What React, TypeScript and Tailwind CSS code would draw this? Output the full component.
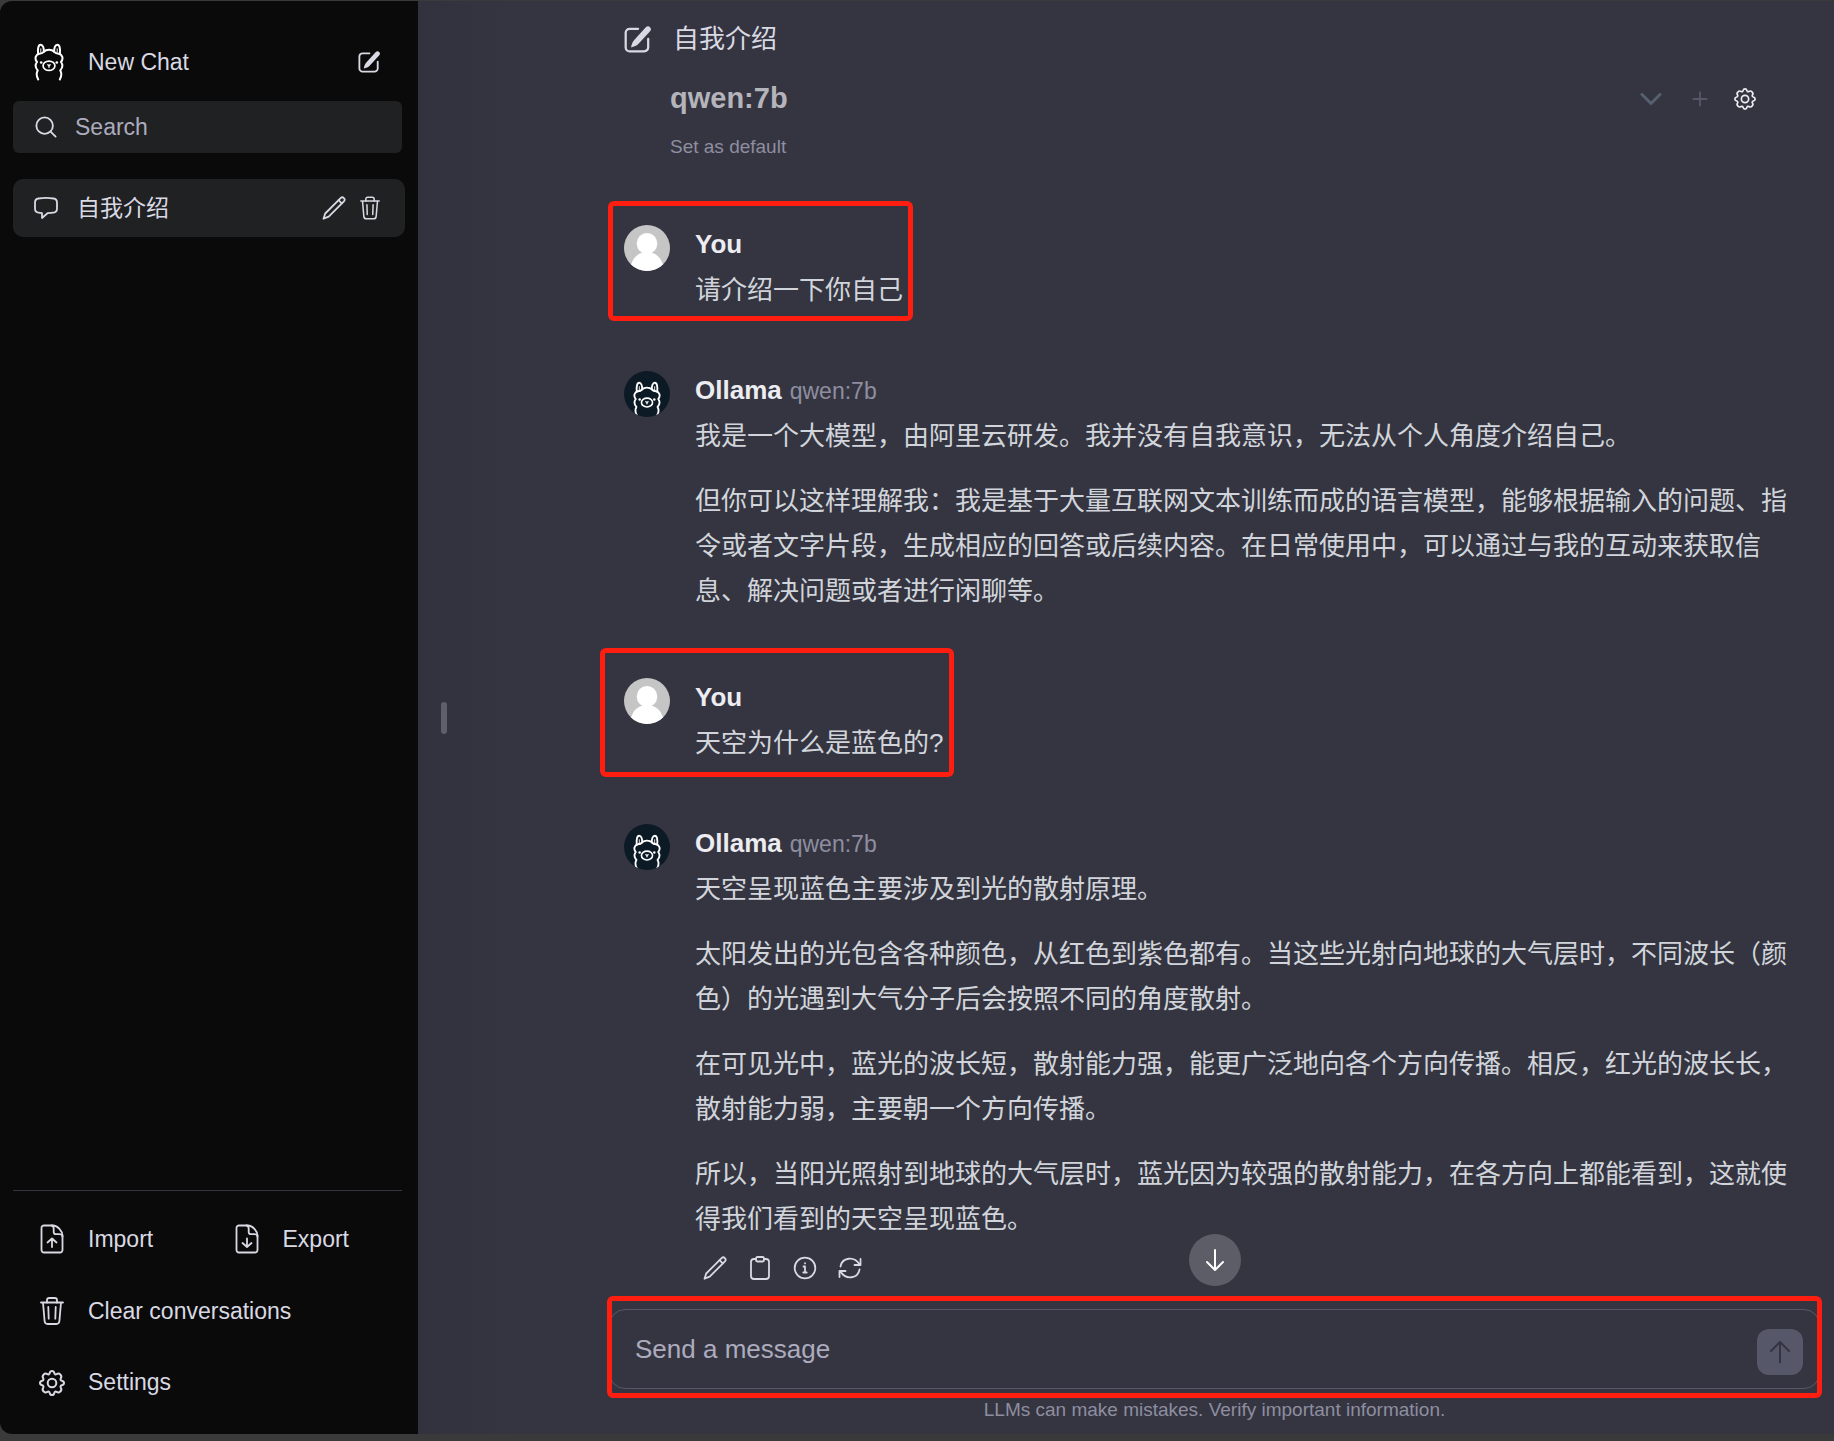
import React, { useState } from 'react';

type IconProps = { className?: string };

function Icon({ className, children, viewBox = '0 0 24 24' }: IconProps & { children: React.ReactNode; viewBox?: string }) {
  return (
    <svg
      viewBox={viewBox}
      className={className}
      fill="none"
      stroke="currentColor"
      strokeWidth={1.8}
      strokeLinecap="round"
      strokeLinejoin="round"
      aria-hidden="true"
    >
      {children}
    </svg>
  );
}

function Llama({ className }: IconProps) {
  return (
    <Icon className={className} viewBox="0 0 34 40">
      <g strokeWidth={2.1}>
        <path d="M5.500 38.500C3.800 35.500 3.600 31.500 5 29C2.500 26 2.300 22.500 4.300 20C1.200 16.500 2.800 12 6.800 11.200C9.200 11 10.200 10.500 11.500 9.200C14 6.400 20 6.400 22.500 9.200C23.800 10.500 24.800 11 27.200 11.200C31.200 12 32.800 16.500 29.700 20C31.700 22.500 31.500 26 29 29C30.400 31.500 30.200 35.500 28.500 38.500" />
        <path d="M5.400 11.500C4.800 5.500 5.800 1.600 8.100 1.600C10.600 1.600 11.700 5.200 11.500 9" />
        <path d="M28.600 11.500C29.200 5.500 28.200 1.600 25.900 1.600C23.400 1.600 22.300 5.200 22.500 9" />
        <path d="M8.300 6V9.500M25.700 6V9.500" strokeWidth={1} />
      </g>
      <ellipse cx="17" cy="24" rx="6.300" ry="5" />
      <path d="M15.800 23L17 24L18.200 23M17 24V25.500" strokeWidth={1.500} />
      <circle cx="8.700" cy="20.500" r="1.400" fill="currentColor" stroke="none" />
      <circle cx="25.300" cy="20.500" r="1.400" fill="currentColor" stroke="none" />
    </Icon>
  );
}

function ComposeIcon({ className }: IconProps) {
  return (
    <Icon className={className}>
      <path strokeWidth={2} d="M12.500 2.500H5A3.500 3.500 0 0 0 1.500 6V19A3.500 3.500 0 0 0 5 22.500H18A3.500 3.500 0 0 0 21.500 19V11.500" />
      <path fill="currentColor" stroke="none" d="M23.100 1C24.200 2.100 24.200 3.600 23.200 4.700L12.700 16.100C11.200 17.600 9 18.500 6.300 19.200C6.600 16.500 7.700 14 9.300 12.300L19.400 1.200C20.400 0.100 22 0 23.100 1Z" />
    </Icon>
  );
}

function PencilIcon({ className }: IconProps) {
  return (
    <Icon className={className}>
      <path d="M1.500 22.700L3.200 17.500L18.600 2.100C20.800 0 24 3 21.900 5.300L6.700 20.700Z" />
      <path d="M16.500 4.200L19.800 7.400" />
    </Icon>
  );
}

function TrashIcon({ className }: IconProps) {
  return (
    <Icon className={className} viewBox="0 0 24 28">
      <path d="M1 5.500H23M3 5.500L4.600 24C4.800 26 5.700 27 7.600 27H16.400C18.300 27 19.200 26 19.400 24L21 5.500" />
      <path d="M7 5.500V3.300C7 1.700 7.800 1 9.300 1H14.700C16.200 1 17 1.700 17 3.300V5.500M8.300 10L8.700 21.700M15.700 10L15.300 21.700" />
    </Icon>
  );
}

function GearIcon({ className }: IconProps) {
  return (
    <Icon className={className} viewBox="0 0 26 26">
      <g strokeWidth={2}>
        <path d="M13 1C14.300 1 15 1.900 15.300 3.100C15.600 4.300 16.500 4.700 17.600 4.100C18.700 3.400 19.900 3.100 21.300 4.500C22.900 6 22.500 7.200 21.800 8.300C21.200 9.400 21.600 10.400 22.800 10.700C24 11 25 11.700 25 13C25 14.300 24 15 22.800 15.300C21.600 15.600 21.200 16.600 21.800 17.700C22.500 18.800 22.900 20 21.300 21.500C19.900 22.900 18.700 22.600 17.600 21.900C16.500 21.300 15.600 21.700 15.300 22.900C15 24.100 14.300 25 13 25C11.700 25 11 24.100 10.700 22.900C10.400 21.700 9.500 21.300 8.400 21.900C7.300 22.600 6.100 22.900 4.700 21.500C3.100 20 3.500 18.800 4.200 17.700C4.800 16.600 4.400 15.600 3.200 15.300C2 15 1 14.300 1 13C1 11.700 2 11 3.200 10.700C4.400 10.400 4.800 9.400 4.200 8.300C3.500 7.200 3.100 6 4.700 4.500C6.100 3.100 7.300 3.400 8.400 4.100C9.500 4.700 10.400 4.300 10.700 3.100C11 1.900 11.700 1 13 1Z" />
        <circle cx="13" cy="13" r="4.300" />
      </g>
    </Icon>
  );
}

function FileIcon({ className, down }: IconProps & { down?: boolean }) {
  return (
    <Icon className={className} viewBox="0 0 24 30">
      <path d="M4 1.500H13C17.500 1.500 22.500 7 22.500 11.500V26A2.500 2.500 0 0 1 20 28.500H4A2.500 2.500 0 0 1 1.500 26V4A2.500 2.500 0 0 1 4 1.500Z" />
      <path d="M11.500 1.500C13.500 1.500 13.700 3.500 13.700 5V8C13.700 9.500 14.400 10.200 15.900 10.200H19C20.500 10.200 22.500 10.500 22.500 12.500" />
      {down ? <path d="M12 14.500V23M7.500 19L12 23L16.500 19" /> : <path d="M12 23V14.500M7.500 18.500L12 14.500L16.500 18.500" />}
    </Icon>
  );
}

function UserAvatar() {
  return (
    <svg viewBox="0 0 46 46" className="size-[46px] shrink-0 rounded-full bg-[#c5c5c5]" aria-hidden="true">
      <ellipse cx="23" cy="18.500" rx="10.300" ry="10.500" fill="#fff" />
      <path d="M7 40C9 32 15 27 23 27C31 27 37 32 39 40C35 44 29 46 23 46C17 46 11 44 7 40Z" fill="#fff" />
    </svg>
  );
}

interface Message {
  from: 'You' | 'Ollama';
  paragraphs: string[];
}

const MESSAGES: Message[] = [
  { from: 'You', paragraphs: ['请介绍一下你自己'] },
  {
    from: 'Ollama',
    paragraphs: [
      '我是一个大模型，由阿里云研发。我并没有自我意识，无法从个人角度介绍自己。',
      '但你可以这样理解我：我是基于大量互联网文本训练而成的语言模型，能够根据输入的问题、指令或者文字片段，生成相应的回答或后续内容。在日常使用中，可以通过与我的互动来获取信息、解决问题或者进行闲聊等。',
    ],
  },
  { from: 'You', paragraphs: ['天空为什么是蓝色的?'] },
  {
    from: 'Ollama',
    paragraphs: [
      '天空呈现蓝色主要涉及到光的散射原理。',
      '太阳发出的光包含各种颜色，从红色到紫色都有。当这些光射向地球的大气层时，不同波长（颜色）的光遇到大气分子后会按照不同的角度散射。',
      '在可见光中，蓝光的波长短，散射能力强，能更广泛地向各个方向传播。相反，红光的波长长，散射能力弱，主要朝一个方向传播。',
      '所以，当阳光照射到地球的大气层时，蓝光因为较强的散射能力，在各方向上都能看到，这就使得我们看到的天空呈现蓝色。',
    ],
  },
];

// red frames around the user's turns, in order of appearance
const FRAMES = [
  '-left-4 -top-6 h-[120px] w-[305px]',
  '-left-6 -top-[30px] h-[129px] w-[354px]',
];

function MessageRow({ message, frame }: { message: Message; frame?: string }) {
  const isUser = message.from === 'You';

  return (
    <article className={`relative flex gap-[25px] ${isUser ? 'pb-[58px]' : 'pb-16 last:pb-0'}`}>
      {isUser ? (
        <UserAvatar />
      ) : (
        <span className="flex size-[46px] shrink-0 items-end justify-center overflow-hidden rounded-full bg-[#0c1a26] text-white">
          <Llama className="h-9 w-[30px]" />
        </span>
      )}
      <div className="min-w-0 flex-1">
        <h2 className="h-[43px] text-[26px] leading-[38px] font-bold text-[#ececf1]">
          {message.from}
          {!isUser && <span className="ml-2 text-[23px] font-normal text-[#8e8ea0]">qwen:7b</span>}
        </h2>
        <div className="space-y-5 text-[26px] leading-[45px] text-[#d1d5db]">
          {message.paragraphs.map((text) => (
            <p key={text}>{text}</p>
          ))}
        </div>
      </div>
      {frame && <span className={`pointer-events-none absolute rounded-md border-[5px] border-[#ff1e10] ${frame}`} />}
    </article>
  );
}

function Sidebar() {
  const [query, setQuery] = useState('');

  return (
    <aside className="flex w-[418px] shrink-0 flex-col rounded-l-xl bg-[#0a0a0a] pr-4 pl-[13px] text-[23px] text-[#d9d9e3]">
      <button type="button" className="mt-9 flex h-[50px] items-center pr-[22px] pl-5">
        <Llama className="h-[38px] w-8 text-white" />
        <span className="ml-[23px] flex-1 text-left font-medium">New Chat</span>
        <ComposeIcon className="size-[22px]" />
      </button>

      <label className="mt-[14px] flex h-[52px] items-center gap-[18px] rounded-md bg-[#202123] px-[22px]">
        <Icon className="size-[22px]">
          <circle cx="10.500" cy="10.500" r="9" strokeWidth={2} />
          <path d="M17 17L22.500 22.500" strokeWidth={2} />
        </Icon>
        <input
          type="text"
          aria-label="Search"
          placeholder="Search"
          value={query}
          onChange={(e) => setQuery(e.target.value)}
          className="min-w-0 flex-1 bg-transparent outline-none placeholder:text-[#acacbe]"
        />
      </label>

      <div className="mt-[26px] -mr-[3px] flex h-[58px] items-center rounded-[10px] bg-[#202123] pr-[25px] pl-[21px]">
        <Icon className="size-6">
          <path d="M4.500 2.500C9 1.700 15 1.700 19.500 2.500C22 2.900 23 4.500 23 6.500V12.500C23 15 22 16.400 19.500 16.700C17.500 17 15.500 17.100 13.500 17.200L8 22V17.100L4.500 16.700C2 16.400 1 15 1 12.500V6.500C1 4.500 2 2.900 4.500 2.500Z" />
        </Icon>
        <a href="#chat" className="ml-[19px] flex-1">自我介绍</a>
        <button type="button" aria-label="Rename" className="mr-[14px]">
          <PencilIcon className="size-6" />
        </button>
        <button type="button" aria-label="Delete">
          <TrashIcon className="h-6 w-5" />
        </button>
      </div>

      <nav className="mt-auto border-t border-[#353541] pt-3 pb-4">
        <div className="grid grid-cols-2">
          <button type="button" className="flex h-[72px] items-center gap-6 pl-[27px]">
            <FileIcon className="h-[30px] w-6" />
            Import
          </button>
          <button type="button" className="flex h-[72px] items-center gap-6 pl-[27px]">
            <FileIcon className="h-[30px] w-6" down />
            Export
          </button>
        </div>
        <button type="button" className="flex h-[72px] w-full items-center gap-6 pl-[27px]">
          <TrashIcon className="h-7 w-6" />
          Clear conversations
        </button>
        <button type="button" className="flex h-[71px] w-full items-center gap-[23px] pl-[26px] font-medium">
          <GearIcon className="size-[26px]" />
          Settings
        </button>
      </nav>
    </aside>
  );
}

export default function App() {
  const [draft, setDraft] = useState('');

  return (
    <div className="flex min-h-screen bg-[#3a3a3a] pt-px pb-[7px] font-['Liberation_Sans','Noto_Sans_CJK_SC',sans-serif]">
      <Sidebar />

      <main className="flex min-w-0 flex-1 bg-[#353541]">
        <div className="flex w-[191px] shrink-0 items-center bg-linear-to-r from-[#32323e] to-[#353541] to-50% pl-[23px]">
          <span className="h-8 w-[6px] rounded-full bg-[#5f5f6a]" />
        </div>

        <div className="flex min-w-0 flex-1 flex-col pr-[14px]">
          <header className="pl-[15px] text-[#d9d9e3]">
            <div className="mt-4 flex h-11 items-center gap-[22px]">
              <ComposeIcon className="size-[27px]" />
              <h1 className="text-[26px]">自我介绍</h1>
            </div>
            <div className="flex h-[76px] items-center pr-16 pl-[46px]">
              <span className="flex-1 text-[29px] font-bold text-[#b4b4ba]">qwen:7b</span>
              <button type="button" aria-label="Choose model" className="mr-[30px] text-[#56606e]">
                <Icon className="h-3 w-[22px]" viewBox="0 0 22 12">
                  <path d="M2 1.500L11 10.500L20 1.500" strokeWidth={3} />
                </Icon>
              </button>
              <button type="button" aria-label="Add model" className="mr-[26px] text-[#565869]">
                <Icon className="size-4" viewBox="0 0 16 16">
                  <path d="M8 1.500V14.500M1.500 8H14.500" />
                </Icon>
              </button>
              <button type="button" aria-label="Model settings" className="text-[#ececf1]">
                <GearIcon className="size-[22px]" />
              </button>
            </div>
            <button type="button" className="ml-[46px] block text-[19px] leading-5 text-[#8e8ea0]">
              Set as default
            </button>
          </header>

          <section className="mt-[68px] pr-[30px] pl-[15px]">
            {MESSAGES.map((message, i) => (
              <MessageRow key={i} message={message} frame={message.from === 'You' ? FRAMES[i / 2] : undefined} />
            ))}
          </section>

          <div className="relative flex h-[51px] items-center gap-[21px] pl-[94px] text-[#d9d9e3]">
            <button type="button" aria-label="Edit">
              <PencilIcon className="size-6" />
            </button>
            <button type="button" aria-label="Copy">
              <Icon className="size-6">
                <path d="M8 3H6A3 3 0 0 0 3 6V20A3 3 0 0 0 6 23H18A3 3 0 0 0 21 20V6A3 3 0 0 0 18 3H16" />
                <rect x="8" y="1" width="8" height="4.500" rx="1.500" />
              </Icon>
            </button>
            <button type="button" aria-label="Details">
              <Icon className="size-6">
                <circle cx="12" cy="12" r="10.300" />
                <path d="M10.500 10.500H12V16.500M10.300 16.500H13.700M12 7.200V7.400" />
              </Icon>
            </button>
            <button type="button" aria-label="Regenerate">
              <Icon className="size-6">
                <path d="M2.500 10.500C4 1.500 16 -0.500 21.500 8.500M22.500 3V9H16.500M21.500 13.500C20 22.500 8 24.500 2.500 15.500M1.500 21V15H7.500" />
              </Icon>
            </button>
            <button
              type="button"
              aria-label="Scroll to bottom"
              className="absolute -top-2 left-1/2 flex size-[52px] -translate-x-1/2 items-center justify-center rounded-full bg-[#5d5d67] text-white"
            >
              <Icon className="size-6">
                <path d="M12 2V22M4 14L12 22L20 14" strokeWidth={2} />
              </Icon>
            </button>
          </div>

          <form
            onSubmit={(e) => e.preventDefault()}
            className="relative mt-auto flex h-20 items-center rounded-2xl border border-[#565869] pr-4 pl-[25px]"
          >
            <input
              type="text"
              aria-label="Send a message"
              placeholder="Send a message"
              value={draft}
              onChange={(e) => setDraft(e.target.value)}
              className="min-w-0 flex-1 bg-transparent text-[26px] text-[#ececf1] outline-none placeholder:text-[#acacbe]"
            />
            <button
              type="submit"
              aria-label="Send"
              className="mb-[13px] flex size-[46px] items-center justify-center self-end rounded-xl bg-[#565869] text-[#353541]"
            >
              <Icon className="size-6">
                <path d="M12 22.500V2M3 11L12 2L21 11" strokeWidth={2} />
              </Icon>
            </button>
            <span className="pointer-events-none absolute -inset-x-[3px] -top-[14px] h-[102px] rounded-md border-[5px] border-[#ff1e10]" />
          </form>
          <p className="pt-[9px] pb-3 text-center text-[19px] leading-6 text-[#8e8ea0]">
            LLMs can make mistakes. Verify important information.
          </p>
        </div>
      </main>
    </div>
  );
}
